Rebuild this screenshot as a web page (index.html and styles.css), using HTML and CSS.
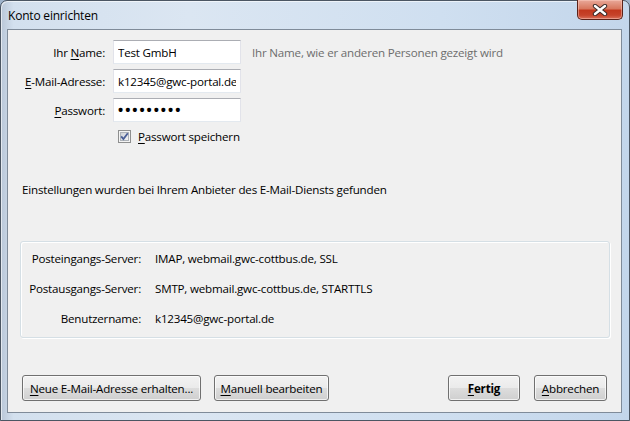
FILE: index.html
```html
<!DOCTYPE html>
<html>
<head>
  <title>Konto einrichten</title>
  <link rel="stylesheet" href="styles.css">
</head>
<body>
  <div class="window">
    <div class="titlebar">
      <span class="title">Konto einrichten</span>
      <button class="close-btn" title="Schließen">
        <svg width="16" height="12" viewBox="0 0 16 12">
          <path d="M3 2 L13 10 M13 2 L3 10" stroke="#3a2a28" stroke-width="4.4" stroke-linecap="round"/>
          <path d="M3 2 L13 10 M13 2 L3 10" stroke="#ffffff" stroke-width="2.4" stroke-linecap="round"/>
        </svg>
      </button>
    </div>

    <div class="client">
      <div class="account-form">
        <label class="field-label"><span>Ihr <u>N</u>ame:</span></label>
        <input class="field" type="text" value="Test GmbH">
        <span class="hint">Ihr Name, wie er anderen Personen gezeigt wird</span>

        <label class="field-label"><span><u>E</u>-Mail-Adresse:</span></label>
        <input class="field" type="text" value="k12345@gwc-portal.de">
        <span></span>

        <label class="field-label"><span><u>P</u>asswort:</span></label>
        <input class="field field-password" type="password" value="geheim123">
        <span></span>

        <span></span>
        <label class="remember">
          <span class="checkbox">
            <svg width="13" height="13" viewBox="0 0 13 13">
              <defs>
                <linearGradient id="cbg" x1="0" y1="0" x2="1" y2="1">
                  <stop offset="0" stop-color="#cbcfd5"/>
                  <stop offset="1" stop-color="#f6f6f6"/>
                </linearGradient>
              </defs>
              <rect x="0.5" y="0.5" width="12" height="12" fill="#f4f4f4" stroke="#8e8f8f"/>
              <rect x="2.5" y="2.5" width="8" height="8" fill="url(#cbg)" stroke="#aeb3b9"/>
              <path d="M3.2 6.4 L5.4 9 L9.8 3.2" fill="none" stroke="#4a5f97" stroke-width="1.8"/>
            </svg>
          </span>
          <span><u>P</u>asswort speichern</span>
        </label>
      </div>

      <p class="found">Einstellungen wurden bei Ihrem Anbieter des E-Mail-Diensts gefunden</p>

      <div class="server-box">
        <span class="server-label">Posteingangs-Server:</span>
        <span>IMAP, webmail.gwc-cottbus.de, SSL</span>
        <span class="server-label">Postausgangs-Server:</span>
        <span>SMTP, webmail.gwc-cottbus.de, STARTTLS</span>
        <span class="server-label">Benutzername:</span>
        <span>k12345@gwc-portal.de</span>
      </div>

      <div class="button-row">
        <button class="btn btn-new"><u>N</u>eue E-Mail-Adresse erhalten...</button>
        <button class="btn btn-manual"><u>M</u>anuell bearbeiten</button>
        <span class="spacer"></span>
        <button class="btn btn-done"><u>F</u>ertig</button>
        <button class="btn btn-cancel"><u>A</u>bbrechen</button>
      </div>
    </div>
  </div>
</body>
</html>
```

FILE: styles.css
```css
* { box-sizing: border-box; }
html, body { margin: 0; padding: 0; }
body {
  width: 630px; height: 421px; overflow: hidden;
  font-family: "Open Sans", "Noto Sans", sans-serif; font-size: 11.6px; letter-spacing: -0.2px; color: #000;
  background: #9fb4cc;
}
u { text-decoration: underline; text-underline-offset: 2px; }

.window {
  width: 630px; height: 421px;
  display: flex; flex-direction: column;
  border: 1px solid #4b5663; border-radius: 7px 7px 0 0;
  background: linear-gradient(90deg, #b9c7d8 0%, #d3e0ee 2%, #dbe6f2 30%, #cfdff0 70%, #c3d6eb 100%);
  box-shadow: inset 1px 1px 0 rgba(255,255,255,0.6);
}

.titlebar {
  height: 28px; flex: none;
  display: flex; align-items: flex-start;
  padding-left: 7px;
}
.title { margin-top: 6px; font-size: 12px; }
.close-btn {
  margin: -1px 6px 0 auto;
  width: 46px; height: 20px; padding: 0;
  display: flex; align-items: center; justify-content: center;
  border: 1px solid #5b2219; border-top: none; border-radius: 0 0 5px 5px;
  background: linear-gradient(#e9a99a 0%, #d8785f 45%, #c2381e 55%, #c6432a 80%, #d9705a 100%);
  box-shadow: inset 0 0 0 1px rgba(255,210,200,0.45);
}

.client {
  flex: 1;
  margin: 0 7px 7px 6px;
  border: 1px solid #7f8b99;
  background: #f0f0f0;
  display: flex; flex-direction: column;
}

.account-form {
  display: grid;
  grid-template-columns: 97px 128px 1fr;
  grid-template-rows: 24px 24px 24px 19px;
  column-gap: 8px; row-gap: 5px;
  margin-top: 10px;
}
.field-label { display: flex; align-items: center; justify-content: flex-end; }
.field {
  width: 128px; height: 24px; margin: 0; padding: 0 4px;
  font: inherit; letter-spacing: inherit; color: #000;
  background: #fff;
  border: 1px solid #e2e3ea; border-top-color: #abadb3; border-bottom-color: #e3e9ef;
  outline: none;
}
.field-password { font-size: 19px; letter-spacing: 0; padding-left: 3px; }
.hint { display: flex; align-items: center; margin-left: 3px; color: #6d6d6d; }

.remember {
  grid-column: 2 / span 2;
  display: flex; align-items: center; gap: 7px;
  padding-left: 5px;
}
.checkbox { display: flex; }

.found { margin: 36px 0 0 14px; line-height: 16px; }

.server-box {
  margin: 43px 11px 0 12px;
  padding: 9px 0 10px;
  border: 1px solid #d5dfe5; border-radius: 3px;
  box-shadow: inset 1px 1px 0 #fff, 1px 1px 0 #fff;
  display: grid;
  grid-template-columns: 120px 1fr;
  column-gap: 14px; row-gap: 14px;
  line-height: 16px;
}
.server-label { text-align: right; }

.button-row {
  margin-top: auto;
  display: flex; align-items: center;
  padding: 0 14px 11px;
  gap: 13px;
}
.spacer { flex: 1; }
.btn {
  height: 26px; padding: 0 4px;
  font: inherit; letter-spacing: inherit; color: #000; white-space: nowrap;
  border: 1px solid #707070; border-radius: 3px;
  background: linear-gradient(#f2f2f2 0%, #ebebeb 49%, #dddddd 51%, #cfcfcf 100%);
  box-shadow: inset 0 0 0 1px rgba(255,255,255,0.7);
}
.btn-new { width: 179px; }
.btn-manual { width: 115px; }
.btn-done { width: 72px; font-weight: bold; margin-right: 1px; }
.btn-cancel { width: 73px; }
```
